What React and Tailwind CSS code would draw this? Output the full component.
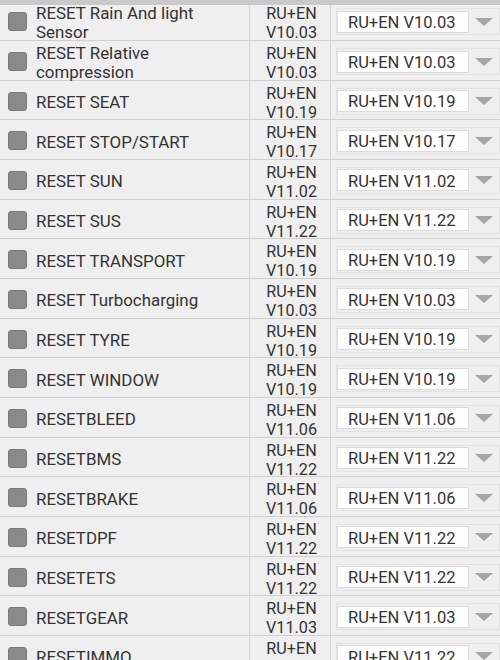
import React from "react";

const rows = [
  { name: "RESET Rain And light Sensor", ver: "V10.03", sel: "V10.03" },
  { name: "RESET Relative compression", ver: "V10.03", sel: "V10.03" },
  { name: "RESET SEAT", ver: "V10.19", sel: "V10.19" },
  { name: "RESET STOP/START", ver: "V10.17", sel: "V10.17" },
  { name: "RESET SUN", ver: "V11.02", sel: "V11.02" },
  { name: "RESET SUS", ver: "V11.22", sel: "V11.22" },
  { name: "RESET TRANSPORT", ver: "V10.19", sel: "V10.19" },
  { name: "RESET Turbocharging", ver: "V10.03", sel: "V10.03" },
  { name: "RESET TYRE", ver: "V10.19", sel: "V10.19" },
  { name: "RESET WINDOW", ver: "V10.19", sel: "V10.19" },
  { name: "RESETBLEED", ver: "V11.06", sel: "V11.06" },
  { name: "RESETBMS", ver: "V11.22", sel: "V11.22" },
  { name: "RESETBRAKE", ver: "V11.06", sel: "V11.06" },
  { name: "RESETDPF", ver: "V11.22", sel: "V11.22" },
  { name: "RESETETS", ver: "V11.22", sel: "V11.22" },
  { name: "RESETGEAR", ver: "V11.03", sel: "V11.03" },
  { name: "RESETIMMO", ver: "V11.22", sel: "V11.22" },
];

const Row = ({ name, ver, sel }) => (
  <div className="grid grid-cols-[250px_81px_169px] h-[39.67px] border-b border-[#cfcfcf] text-[#333333]">
    {/* name + checkbox */}
    <div className="flex items-center border-r border-[#d6d6d6] pl-2 pr-[24px]">
      <span className="w-[19px] h-[19px] shrink-0 rounded-[3px] bg-[#8a8a8a] border border-[#7a7a7a]" />
      <span className="ml-[9px] text-[16.9px] leading-[19px] pt-[3px]">{name}</span>
    </div>

    {/* version */}
    <div className="flex items-center justify-center border-r border-[#d6d6d6]">
      <span className="text-center text-[16.2px] leading-[19px] pt-[3px] pl-[3px]">
        RU+EN
        <br />
        {ver}
      </span>
    </div>

    {/* dropdown */}
    <div className="flex items-center pl-[5px] py-[7px]">
      <div className="flex-1 h-full flex items-center border border-[#e2e2e2]">
        <div className="w-[132px] h-[22px] bg-white border border-[#dcdcdc] flex items-center pl-[10px] pt-[3px] text-[16.5px] leading-none">
          RU+EN {sel}
        </div>
        <div className="flex-1 flex items-center justify-center">
          <svg width="18" height="8" viewBox="0 0 18 8">
            <path d="M0 0 L18 0 L9 8 Z" fill="#a6a6a6" />
          </svg>
        </div>
      </div>
    </div>
  </div>
);

export default function App() {
  return (
    <div className="w-[500px] h-[660px] overflow-hidden bg-[#efefef] font-['Roboto','Liberation_Sans',sans-serif]">
      <div className="relative z-10 h-[5px] bg-[#c9c9c9]" />
      <div className="-mt-[3.67px]">
        {rows.map((r) => (
          <Row key={r.name} {...r} />
        ))}
      </div>
    </div>
  );
}
